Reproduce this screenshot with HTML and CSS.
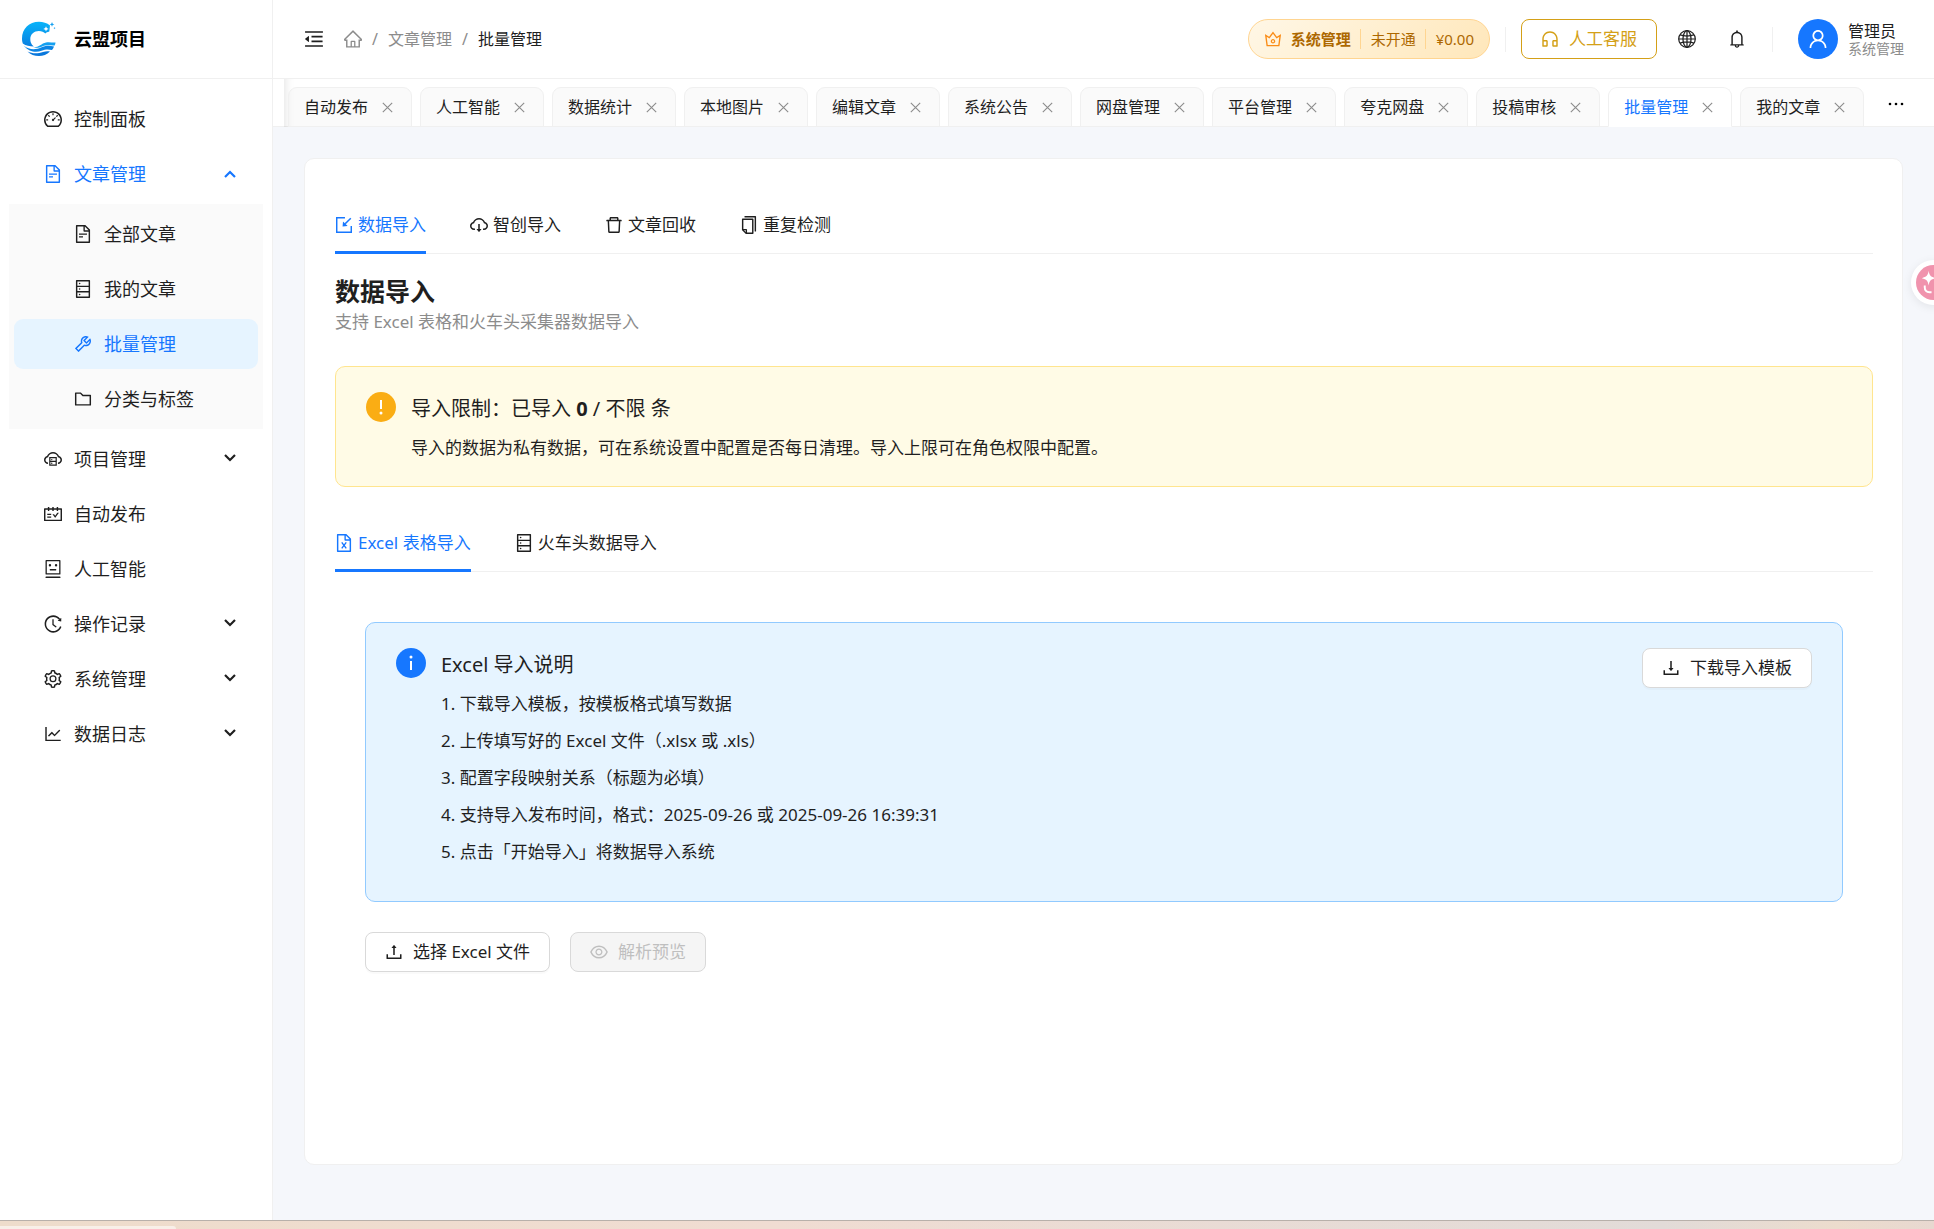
FILE: index.html
```html
<!DOCTYPE html>
<html lang="zh-CN">
<head>
  <meta charset="UTF-8">
  <meta name="viewport" content="width=device-width, initial-scale=1.0">
  <title>批量管理 - 云盟项目</title>
  <link rel="stylesheet" href="styles.css">
</head>
<body>

  <!-- icon set -->
  <svg class="sprite" aria-hidden="true">
    <symbol id="i-dashboard" viewBox="64 64 896 896"><path d="M924.8 385.6a446.7 446.7 0 00-96-142.4 446.7 446.7 0 00-142.4-96C631.1 123.8 572.5 112 512 112s-119.1 11.8-174.4 35.2a446.7 446.7 0 00-142.4 96 446.7 446.7 0 00-96 142.4C75.8 440.9 64 499.5 64 560c0 132.7 58.3 257.7 159.9 343.1l1.7 1.4c5.8 4.8 13.1 7.5 20.6 7.5h531.7c7.5 0 14.8-2.7 20.6-7.5l1.7-1.4C901.7 817.7 960 692.7 960 560c0-60.5-11.9-119.1-35.2-174.4zM761.4 836H262.6A371.12 371.12 0 01140 560c0-99.4 38.7-192.8 109-263 70.3-70.3 163.7-109 263-109 99.4 0 192.8 38.7 263 109 70.3 70.3 109 163.7 109 263 0 105.6-44.5 205.5-122.6 276zM623.5 421.5a8.03 8.03 0 00-11.3 0L527.7 506c-18.7-5-39.4-.2-54.1 14.5a55.95 55.95 0 000 79.2 55.95 55.95 0 0079.2 0 55.87 55.87 0 0014.5-54.1l84.5-84.5c3.1-3.1 3.1-8.2 0-11.3l-28.3-28.3zM490 320h44c4.4 0 8-3.6 8-8v-80c0-4.4-3.6-8-8-8h-44c-4.4 0-8 3.6-8 8v80c0 4.4 3.6 8 8 8zm260 218v44c0 4.4 3.6 8 8 8h80c4.4 0 8-3.6 8-8v-44c0-4.4-3.6-8-8-8h-80c-4.4 0-8 3.6-8 8zm12.7-197.2l-31.1-31.1a8.03 8.03 0 00-11.3 0l-56.6 56.6a8.03 8.03 0 000 11.3l31.1 31.1c3.1 3.1 8.2 3.1 11.3 0l56.6-56.6c3.1-3.1 3.1-8.2 0-11.3zm-458.6-31.1a8.03 8.03 0 00-11.3 0l-31.1 31.1a8.03 8.03 0 000 11.3l56.6 56.6c3.1 3.1 8.2 3.1 11.3 0l31.1-31.1c3.1-3.1 3.1-8.2 0-11.3l-56.6-56.6zM262 530h-80c-4.4 0-8 3.6-8 8v44c0 4.4 3.6 8 8 8h80c4.4 0 8-3.6 8-8v-44c0-4.4-3.6-8-8-8z"/></symbol>
    <symbol id="i-file-text" viewBox="64 64 896 896"><path d="M854.6 288.6L639.4 73.4c-6-6-14.1-9.4-22.6-9.4H192c-17.7 0-32 14.3-32 32v832c0 17.7 14.3 32 32 32h640c17.7 0 32-14.3 32-32V311.3c0-8.5-3.4-16.7-9.4-22.7zM790.2 326H602V137.8L790.2 326zm1.8 562H232V136h302v216a42 42 0 0042 42h216v494zM504 618H320c-4.4 0-8 3.6-8 8v48c0 4.4 3.6 8 8 8h184c4.4 0 8-3.6 8-8v-48c0-4.4-3.6-8-8-8zM312 490v48c0 4.4 3.6 8 8 8h384c4.4 0 8-3.6 8-8v-48c0-4.4-3.6-8-8-8H320c-4.4 0-8 3.6-8 8z"/></symbol>
    <symbol id="i-file-excel" viewBox="64 64 896 896"><path d="M854.6 288.6L639.4 73.4c-6-6-14.1-9.4-22.6-9.4H192c-17.7 0-32 14.3-32 32v832c0 17.7 14.3 32 32 32h640c17.7 0 32-14.3 32-32V311.3c0-8.5-3.4-16.7-9.4-22.7zM790.2 326H602V137.8L790.2 326zm1.8 562H232V136h302v216a42 42 0 0042 42h216v494z"/><path d="M400 480L624 780M624 480L400 780" fill="none" stroke="currentColor" stroke-width="68"/></symbol>
    <symbol id="i-database" viewBox="64 64 896 896"><path d="M832 64H192c-17.7 0-32 14.3-32 32v832c0 17.7 14.3 32 32 32h640c17.7 0 32-14.3 32-32V96c0-17.7-14.3-32-32-32zm-600 72h560v208H232V136zm560 480H232V408h560v208zm0 272H232V680h560v208zM304 240a40 40 0 1080 0 40 40 0 10-80 0zm0 272a40 40 0 1080 0 40 40 0 10-80 0zm0 272a40 40 0 1080 0 40 40 0 10-80 0z"/></symbol>
    <symbol id="i-tool" viewBox="64 64 896 896"><path d="M876.6 239.5c-.5-.9-1.2-1.8-2-2.5-5-5-13.1-5-18.1 0L684.2 409.3l-67.9-67.9L788.7 169c.8-.8 1.4-1.6 2-2.5 3.6-6.1 1.6-13.9-4.5-17.5-98.2-58-226.8-44.7-311.3 39.7-67 67-89.2 162-66.5 247.4l-293 293c-3 3-2.8 7.9.3 11l169.7 169.7c3.1 3.1 8.1 3.3 11 .3l292.9-292.9c85.5 22.8 180.5.7 247.6-66.4 84.4-84.5 97.7-213.1 39.7-311.3zM786 499.8c-58.1 58.1-145.3 69.3-214.6 33.6l-8.8 8.8-.1-.1-274 274.1-79.2-79.2 230.1-230.1s0 .1.1.1l52.8-52.8c-35.7-69.3-24.5-156.5 33.6-214.6a184.2 184.2 0 01144-53.5L537 318.9a32.05 32.05 0 000 45.3l124.5 124.5a32.05 32.05 0 0045.3 0l132.8-132.8c3.7 51.8-14.4 104.8-53.6 143.9z"/></symbol>
    <symbol id="i-folder" viewBox="64 64 896 896"><path d="M880 298.4H521L403.7 186.2a8.15 8.15 0 00-5.5-2.2H144c-17.7 0-32 14.3-32 32v592c0 17.7 14.3 32 32 32h736c17.7 0 32-14.3 32-32V330.4c0-17.7-14.3-32-32-32zM840 768H184V256h188.5l119.6 114.4H840V768z"/></symbol>
    <symbol id="i-cloud-server" viewBox="64 64 896 896"><path d="M811.4 366.7C765.6 245.9 648.9 160 512.2 160S258.8 245.8 213 366.6C127.3 389.1 64 467.2 64 560c0 110.5 89.5 200 199.9 200v-76c-33.7 0-65.4-13.4-89-37.7-23.5-24.2-36-56.8-34.9-90.6.9-26.4 9.9-51.2 26.2-72.1 16.7-21.3 40.1-36.8 66.1-43.7l37.9-9.9 13.9-36.6c8.6-22.8 20.6-44.1 35.7-63.4a245.6 245.6 0 0152.4-49.9c41.1-28.9 89.5-44.2 140-44.2s98.9 15.3 140 44.2c19.9 14 37.5 30.8 52.4 49.9 15.1 19.3 27.1 40.7 35.7 63.4l13.8 36.5 37.8 10C846.1 454.5 884 503.8 884 560c0 33.1-12.9 64.3-36.3 87.7a123.07 123.07 0 01-87.6 36.3v76C870.5 760 960 670.5 960 560c0-92.7-63.1-170.7-148.6-193.3z"/><path d="M353 445h318v372H353zM353 631h318" fill="none" stroke="currentColor" stroke-width="60"/><circle cx="450" cy="540" r="34"/><circle cx="450" cy="724" r="34"/></symbol>
    <symbol id="i-schedule" viewBox="64 64 896 896"><path d="M928 224H768v-56c0-4.4-3.6-8-8-8h-56c-4.4 0-8 3.6-8 8v56H548v-56c0-4.4-3.6-8-8-8h-56c-4.4 0-8 3.6-8 8v56H328v-56c0-4.4-3.6-8-8-8h-56c-4.4 0-8 3.6-8 8v56H96c-17.7 0-32 14.3-32 32v576c0 17.7 14.3 32 32 32h832c17.7 0 32-14.3 32-32V256c0-17.7-14.3-32-32-32zm-40 568H136V296h120v56c0 4.4 3.6 8 8 8h56c4.4 0 8-3.6 8-8v-56h148v56c0 4.4 3.6 8 8 8h56c4.4 0 8-3.6 8-8v-56h148v56c0 4.4 3.6 8 8 8h56c4.4 0 8-3.6 8-8v-56h120v496zM416 496H232c-4.4 0-8 3.6-8 8v48c0 4.4 3.6 8 8 8h184c4.4 0 8-3.6 8-8v-48c0-4.4-3.6-8-8-8zm0 136H232c-4.4 0-8 3.6-8 8v48c0 4.4 3.6 8 8 8h184c4.4 0 8-3.6 8-8v-48c0-4.4-3.6-8-8-8zm308.2-177.4L620.6 598.3l-52.8-73.1c-3-4.2-7.8-6.6-12.9-6.6H500c-6.5 0-10.3 7.4-6.5 12.7l114.1 158.2a15.9 15.9 0 0025.8 0l165-228.7c3.8-5.3 0-12.7-6.5-12.7H737c-5-.1-9.8 2.4-12.8 6.5z"/></symbol>
    <symbol id="i-robot" viewBox="64 64 896 896"><path d="M300 328a60 60 0 10120 0 60 60 0 10-120 0zM852 64H172c-17.7 0-32 14.3-32 32v660c0 17.7 14.3 32 32 32h680c17.7 0 32-14.3 32-32V96c0-17.7-14.3-32-32-32zm-32 660H204V128h616v596zM604 328a60 60 0 10120 0 60 60 0 10-120 0zm250.2 556H169.8c-16.5 0-29.8 14.3-29.8 32v36c0 4.4 3.3 8 7.4 8h729.1c4.1 0 7.4-3.6 7.4-8v-36c.1-17.7-13.2-32-29.7-32zM664 508H360c-4.4 0-8 3.6-8 8v60c0 4.4 3.6 8 8 8h304c4.4 0 8-3.6 8-8v-60c0-4.4-3.6-8-8-8z"/></symbol>
    <symbol id="i-history" viewBox="64 64 896 896"><path d="M536.1 273H488c-4.4 0-8 3.6-8 8v275.3c0 2.6 1.2 5 3.3 6.5l165.3 120.7c3.6 2.6 8.6 1.9 11.2-1.7l28.6-39c2.7-3.7 1.9-8.7-1.7-11.2L544.1 528.5V281c0-4.4-3.6-8-8-8zm219.8 75.2l156.8 38.3c5 1.2 9.9-2.6 9.9-7.7l.8-161.5c0-6.7-7.7-10.5-12.9-6.3L752.9 334.1a8 8 0 003 14.1zm167.7 301.1l-56.7-19.5a8 8 0 00-10.1 4.8c-1.9 5.1-3.9 10.1-6 15.1-17.8 42.1-43.3 80-75.9 112.5a353 353 0 01-112.5 75.9 352.18 352.18 0 01-137.7 27.8c-47.8 0-94.1-9.3-137.7-27.8a353 353 0 01-112.5-75.9c-32.5-32.5-58-70.4-75.9-112.5A353.44 353.44 0 01171 512c0-47.8 9.3-94.2 27.8-137.8 17.8-42.1 43.3-80 75.9-112.5a353 353 0 01112.5-75.9C430.6 167.3 477 158 524.8 158s94.1 9.3 137.7 27.8A353 353 0 01775 261.7c10.2 10.3 19.8 21 28.6 32.3l59.8-46.8C784.7 146.6 662.2 81.9 524.6 82 285 82.1 92.6 276.7 95 516.4 97.4 751.9 288.9 942 524.8 942c185.5 0 343.5-117.6 403.7-282.3 1.5-4.2-.7-8.9-4.9-10.4z"/></symbol>
    <symbol id="i-setting" viewBox="64 64 896 896"><path d="M924.8 625.7l-65.5-56c3.1-19 4.7-38.4 4.7-57.8s-1.6-38.8-4.7-57.8l65.5-56a32.03 32.03 0 009.3-35.2l-.9-2.6a443.74 443.74 0 00-79.7-137.9l-1.8-2.1a32.12 32.12 0 00-35.1-9.5l-81.3 28.9c-30-24.6-63.5-44-99.7-57.6l-15.7-85a32.05 32.05 0 00-25.8-25.7l-2.7-.5c-52.1-9.4-106.9-9.4-159 0l-2.7.5a32.05 32.05 0 00-25.8 25.7l-15.8 85.4a351.86 351.86 0 00-99 57.4l-81.9-29.1a32 32 0 00-35.1 9.5l-1.8 2.1a446.02 446.02 0 00-79.7 137.9l-.9 2.6c-4.5 12.5-.8 26.5 9.3 35.2l66.3 56.6c-3.1 18.8-4.6 38-4.6 57.1 0 19.2 1.5 38.4 4.6 57.1L99 625.5a32.03 32.03 0 00-9.3 35.2l.9 2.6c18.1 50.4 44.9 96.9 79.7 137.9l1.8 2.1a32.12 32.12 0 0035.1 9.5l81.9-29.1c29.8 24.5 63.1 43.9 99 57.4l15.8 85.4a32.05 32.05 0 0025.8 25.7l2.7.5a449.4 449.4 0 00159 0l2.7-.5a32.05 32.05 0 0025.8-25.7l15.7-85a350 350 0 0099.7-57.6l81.3 28.9a32 32 0 0035.1-9.5l1.8-2.1c34.8-41.1 61.6-87.5 79.7-137.9l.9-2.6c4.5-12.3.8-26.3-9.3-35zM788.3 465.9c2.5 15.1 3.8 30.6 3.8 46.1s-1.3 31-3.8 46.1l-6.6 40.1 74.7 63.9a370.03 370.03 0 01-42.6 73.6L721 702.8l-31.4 25.8c-23.9 19.6-50.5 35-79.3 45.8l-38.1 14.3-17.9 97a377.5 377.5 0 01-85 0l-17.9-97.2-37.8-14.5c-28.5-10.8-55-26.2-78.7-45.7l-31.4-25.9-93.4 33.2c-17-22.9-31.2-47.6-42.6-73.6l75.5-64.5-6.5-40c-2.4-14.9-3.7-30.3-3.7-45.5 0-15.3 1.2-30.6 3.7-45.5l6.5-40-75.5-64.5c11.3-26.1 25.6-50.7 42.6-73.6l93.4 33.2 31.4-25.9c23.7-19.5 50.2-34.9 78.7-45.7l37.9-14.3 17.9-97.2c28.1-3.2 56.8-3.2 85 0l17.9 97 38.1 14.3c28.7 10.8 55.4 26.2 79.3 45.8l31.4 25.8 92.8-32.9c17 22.9 31.2 47.6 42.6 73.6L781.8 426l6.5 39.9z"/><circle cx="512" cy="502" r="144" fill="none" stroke="currentColor" stroke-width="64"/></symbol>
    <symbol id="i-chart" viewBox="64 64 896 896"><path d="M888 792H200V168c0-4.4-3.6-8-8-8h-56c-4.4 0-8 3.6-8 8v688c0 4.4 3.6 8 8 8h752c4.4 0 8-3.6 8-8v-56c0-4.4-3.6-8-8-8zM305.8 637.7c3.1 3.1 8.1 3.1 11.3 0l138.3-137.6L583 628.5c3.1 3.1 8.2 3.1 11.3 0l275.4-275.3c3.1-3.1 3.1-8.2 0-11.3l-39.6-39.6a8.03 8.03 0 00-11.3 0l-230 229.9L461.4 404a8.03 8.03 0 00-11.3 0L266.3 586.7a8.03 8.03 0 000 11.3l39.5 39.7z"/></symbol>
    <symbol id="i-home" viewBox="64 64 896 896"><path d="M946.5 505L560.1 118.8l-25.9-25.9a31.5 31.5 0 00-44.4 0L77.5 505a63.9 63.9 0 00-18.8 46c.4 35.2 29.7 63.3 64.9 63.3h42.5V940h691.8V614.3h43.4c17.1 0 33.2-6.7 45.3-18.8a63.6 63.6 0 0018.7-45.3c0-17-6.7-33.1-18.8-45.2zM568 868H456V664h112v204zm217.9-325.7V868H632V640c0-22.1-17.9-40-40-40H432c-22.1 0-40 17.9-40 40v228H238.1V542.3h-96l370-369.7 23.1 23.1L882 542.3h-96.1z"/></symbol>
    <symbol id="i-fold" viewBox="64 64 896 896"><path d="M408 442h480c4.4 0 8-3.6 8-8v-56c0-4.4-3.6-8-8-8H408c-4.4 0-8 3.6-8 8v56c0 4.4 3.6 8 8 8zm-8 204c0 4.4 3.6 8 8 8h480c4.4 0 8-3.6 8-8v-56c0-4.4-3.6-8-8-8H408c-4.4 0-8 3.6-8 8v56zm504-486H120c-4.4 0-8 3.6-8 8v56c0 4.4 3.6 8 8 8h784c4.4 0 8-3.6 8-8v-56c0-4.4-3.6-8-8-8zm0 632H120c-4.4 0-8 3.6-8 8v56c0 4.4 3.6 8 8 8h784c4.4 0 8-3.6 8-8v-56c0-4.4-3.6-8-8-8zM115.4 518.9L271.7 642c5.8 4.6 14.4.5 14.4-6.9V388.9c0-7.4-8.5-11.5-14.4-6.9L115.4 505.1a8.74 8.74 0 000 13.8z"/></symbol>
    <symbol id="i-crown" viewBox="64 64 896 896"><path d="M899.6 276.5L705 396.4 518.4 147.5a8.06 8.06 0 00-12.9 0L319 396.4 124.3 276.5c-5.7-3.5-13.1 1.2-12.2 7.9L188.5 865c1.1 7.9 7.9 14 16 14h615.1c8 0 14.9-6 15.9-14l76.4-580.6c.8-6.7-6.5-11.4-12.3-7.9zm-126 534.1H250.3l-53.8-409.4 139.8 86.1L512 252.9l175.7 234.4 139.8-86.1-53.9 409.4zM512 509c-62.1 0-112.6 50.5-112.6 112.6S449.9 734.2 512 734.2s112.6-50.5 112.6-112.6S574.1 509 512 509zm0 160.9c-26.6 0-48.2-21.6-48.2-48.3 0-26.6 21.6-48.3 48.2-48.3s48.2 21.6 48.2 48.3c0 26.6-21.6 48.3-48.2 48.3z"/></symbol>
    <symbol id="i-service" viewBox="64 64 896 896"><path d="M512 128c-212.1 0-384 171.9-384 384v360c0 13.3 10.7 24 24 24h184c35.3 0 64-28.7 64-64V624c0-35.3-28.7-64-64-64H200v-48c0-172.3 139.7-312 312-312s312 139.7 312 312v48H688c-35.3 0-64 28.7-64 64v208c0 35.3 28.7 64 64 64h184c13.3 0 24-10.7 24-24V512c0-212.1-171.9-384-384-384zM328 632v192H200V632h128zm496 192H696V632h128v192z"/></symbol>
    <symbol id="i-globe" viewBox="64 64 896 896"><g fill="none" stroke="currentColor" stroke-width="62"><circle cx="512" cy="512" r="412"/><ellipse cx="512" cy="512" rx="200" ry="412"/><path d="M512 100v824M100 512h824M165 310c200 64 494 64 694 0M165 714c200-64 494-64 694 0"/></g></symbol>
    <symbol id="i-bell" viewBox="64 64 896 896"><path d="M816 768h-24V428c0-141.1-104.3-257.7-240-277.1V112c0-22.1-17.9-40-40-40s-40 17.9-40 40v38.9c-135.7 19.4-240 136-240 277.1v340h-24c-17.7 0-32 14.3-32 32v32c0 4.4 3.6 8 8 8h216c0 61.8 50.2 112 112 112s112-50.2 112-112h216c4.4 0 8-3.6 8-8v-32c0-17.7-14.3-32-32-32zM512 888c-26.5 0-48-21.5-48-48h96c0 26.5-21.5 48-48 48zM304 768V428c0-55.6 21.6-107.8 60.9-147.1S456.4 220 512 220c55.6 0 107.8 21.6 147.1 60.9S720 372.4 720 428v340H304z"/></symbol>
    <symbol id="i-user" viewBox="64 64 896 896"><path d="M858.5 763.6a374 374 0 00-80.6-119.5 375.63 375.63 0 00-119.5-80.6c-.4-.2-.8-.3-1.2-.5C719.5 518 760 444.7 760 362c0-137-111-248-248-248S264 225 264 362c0 82.7 40.5 156 102.8 201.1-.4.2-.8.3-1.2.5-44.8 18.9-85 46-119.5 80.6a375.63 375.63 0 00-80.6 119.5A371.7 371.7 0 00136 901.8a8 8 0 008 8.2h60c4.4 0 7.9-3.5 8-7.8 2-77.2 33-149.5 87.8-204.3 56.7-56.7 132-87.9 212.2-87.9s155.5 31.2 212.2 87.9C779 752.7 810 825 812 902.2c.1 4.4 3.6 7.8 8 7.8h60a8 8 0 008-8.2c-1-47.8-10.9-94.3-29.5-138.2zM512 534c-45.9 0-89.1-17.9-121.6-50.4S340 407.9 340 362c0-45.9 17.9-89.1 50.4-121.6S466.1 190 512 190s89.1 17.9 121.6 50.4S684 316.1 684 362c0 45.9-17.9 89.1-50.4 121.6S557.9 534 512 534z"/></symbol>
    <symbol id="i-import" viewBox="64 64 896 896"><path d="M560 150H150v724h724V560" fill="none" stroke="currentColor" stroke-width="72"/><path d="M850 174L570 454" fill="none" stroke="currentColor" stroke-width="76"/><path d="M462 352l-20 226a8 8 0 009 9l226-20a8 8 0 005-13L476 347a8 8 0 00-14 5z"/></symbol>
    <symbol id="i-cloud-download" viewBox="64 64 896 896"><path d="M624 706.3h-74.1V464c0-4.4-3.6-8-8-8h-60c-4.4 0-8 3.6-8 8v242.3H400c-6.7 0-10.4 7.7-6.3 12.9l112 141.7a8 8 0 0012.6 0l112-141.7c4.1-5.2.4-12.9-6.3-12.9z"/><path d="M811.4 366.7C765.6 245.9 648.9 160 512.2 160S258.8 245.8 213 366.6C127.3 389.1 64 467.2 64 560c0 110.5 89.5 200 199.9 200H304c4.4 0 8-3.6 8-8v-60c0-4.4-3.6-8-8-8h-40.1c-33.7 0-65.4-13.4-89-37.7-23.5-24.2-36-56.8-34.9-90.6.9-26.4 9.9-51.2 26.2-72.1 16.7-21.3 40.1-36.8 66.1-43.7l37.9-9.9 13.9-36.6c8.6-22.8 20.6-44.1 35.7-63.4a245.6 245.6 0 0152.4-49.9c41.1-28.9 89.5-44.2 140-44.2s98.9 15.3 140 44.2c19.9 14 37.5 30.8 52.4 49.9 15.1 19.3 27.1 40.7 35.7 63.4l13.8 36.5 37.8 10C846.1 454.5 884 503.8 884 560c0 33.1-12.9 64.3-36.3 87.7a123.07 123.07 0 01-87.6 36.3H720c-4.4 0-8 3.6-8 8v60c0 4.4 3.6 8 8 8h40.1C870.5 760 960 670.5 960 560c0-92.7-63.1-170.7-148.6-193.3z"/></symbol>
    <symbol id="i-delete" viewBox="64 64 896 896"><path d="M360 184h304v72h72v-80c0-35.3-28.7-64-64-64H352c-35.3 0-64 28.7-64 64v80h72v-72zm504 72H160c-17.7 0-32 14.3-32 32v32c0 4.4 3.6 8 8 8h60.4l24.7 523c1.6 34.1 29.8 61 63.9 61h454c34.2 0 62.3-26.8 63.9-61l24.7-523H888c4.4 0 8-3.6 8-8v-32c0-17.7-14.3-32-32-32zM731.3 840H292.7l-24.2-512h487l-24.2 512z"/></symbol>
    <symbol id="i-copy" viewBox="64 64 896 896"><path d="M832 64H296c-4.4 0-8 3.6-8 8v56c0 4.4 3.6 8 8 8h496v688c0 4.4 3.6 8 8 8h56c4.4 0 8-3.6 8-8V96c0-17.7-14.3-32-32-32zM704 192H192c-17.7 0-32 14.3-32 32v530.7c0 8.5 3.4 16.6 9.4 22.6l173.3 173.3c2.2 2.2 4.7 4 7.4 5.5v1.9h4.2c3.5 1.3 7.2 2 11 2H704c17.7 0 32-14.3 32-32V224c0-17.7-14.3-32-32-32zM350 856.2L263.9 770H350v86.2zM664 888H414V746c0-22.1-17.9-40-40-40H232V264h432v624z"/></symbol>
    <symbol id="i-upload" viewBox="64 64 896 896"><path d="M400 317.7h73.9V656c0 4.4 3.6 8 8 8h60c4.4 0 8-3.6 8-8V317.7H624c6.7 0 10.4-7.7 6.3-12.9L518.3 163a8 8 0 00-12.6 0l-112 141.7c-4.1 5.3-.4 13 6.3 13zM878 626h-60c-4.4 0-8 3.6-8 8v154H214V634c0-4.4-3.6-8-8-8h-60c-4.4 0-8 3.6-8 8v198c0 17.7 14.3 32 32 32h684c17.7 0 32-14.3 32-32V634c0-4.4-3.6-8-8-8z"/></symbol>
    <symbol id="i-download" viewBox="64 64 896 896"><path d="M505.7 661a8 8 0 0012.6 0l112-141.7c4.1-5.2.4-12.9-6.3-12.9h-74.1V168c0-4.4-3.6-8-8-8h-60c-4.4 0-8 3.6-8 8v338.3H400c-6.7 0-10.4 7.7-6.3 12.9l112 141.8zM878 626h-60c-4.4 0-8 3.6-8 8v154H214V634c0-4.4-3.6-8-8-8h-60c-4.4 0-8 3.6-8 8v198c0 17.7 14.3 32 32 32h684c17.7 0 32-14.3 32-32V634c0-4.4-3.6-8-8-8z"/></symbol>
    <symbol id="i-eye" viewBox="64 64 896 896"><path d="M942.2 486.2C847.4 286.5 704.1 186 512 186c-192.2 0-335.4 100.5-430.2 300.3a60.3 60.3 0 000 51.5C176.6 737.5 319.9 838 512 838c192.2 0 335.4-100.5 430.2-300.3 7.7-16.2 7.7-35 0-51.5zM512 766c-161.3 0-279.4-81.8-362.7-254C232.6 339.8 350.7 258 512 258c161.3 0 279.4 81.8 362.7 254C791.5 684.2 673.4 766 512 766zm-4-430c-97.2 0-176 78.8-176 176s78.8 176 176 176 176-78.8 176-176-78.8-176-176-176zm0 288c-61.9 0-112-50.1-112-112s50.1-112 112-112 112 50.1 112 112-50.1 112-112 112z"/></symbol>
    <symbol id="i-close" viewBox="0 0 16 16"><path d="M3 3l10 10M13 3L3 13" fill="none" stroke="currentColor" stroke-width="1.2"/></symbol>
    <symbol id="i-down" viewBox="0 0 12 12"><path d="M1 2l5 5 5-5" fill="none" stroke="currentColor" stroke-width="2.2"/></symbol>
    <symbol id="i-up" viewBox="0 0 12 12"><path d="M1 9l5-5 5 5" fill="none" stroke="currentColor" stroke-width="2.2"/></symbol>
    <symbol id="i-more" viewBox="0 0 16 16"><circle cx="2" cy="8" r="1.3"/><circle cx="8" cy="8" r="1.3"/><circle cx="14" cy="8" r="1.3"/></symbol>
  </svg>

  <div class="app">
    <aside class="sidebar">
      <a class="brand" href="#">
        <svg class="brand-logo" viewBox="0 0 36 36" aria-hidden="true">
          <defs>
            <linearGradient id="wave" x1="0" y1="0" x2="0" y2="1">
              <stop offset="0" stop-color="#08b4fa"/>
              <stop offset="1" stop-color="#0a7fe0"/>
            </linearGradient>
          </defs>
          <path fill="url(#wave)" d="M29 4.500C26 2 22 .8 18 .8 8 .8 1 8 1 17.500c0 2 .3 3.500.8 5 3 2.500 7 2.500 11 3-3-2.500-3.500-5-3.500-7.500 0-5 4-8 8.500-8 3 0 5 1 6.500 2.500 1-1 2-1.500 4-2z"/>
          <path fill="#14a0f0" d="M11 26c6 1.500 9-3.500 14-4.500 4-.8 6 .5 9.500 0-.2 1.500-.4 2-.8 3-5 .2-8-1-12 .8-4 1.700-7 2-10.700.7z"/>
          <path fill="#0b84e4" d="M2.500 24.500c6 5 13 4 17.500 2 4.500-2 8-2 13-1-.8 2-1.200 2.500-2 3.500-4-.8-6.500-.8-10.500.8-5 2-12 1.700-18-5.300z"/>
          <path fill="#0a78dc" d="M6.500 30.500c5 2.500 11 2 15.500.5 2.500-.8 4.500-1 7-.5-3 3-7 4.500-11 4.500-4.500 0-8.500-1.500-11.500-4.500z"/>
          <path fill="#fff" d="M25 5.200l.8 1.900 1.900.8-1.900.8-.8 1.900-.8-1.900-1.900-.8 1.900-.8z"/>
          <path fill="#14a0f0" d="M31 1l.7 1.700 1.700.7-1.700.7L31 5.800l-.7-1.700-1.700-.7 1.700-.7zM33.500 6l.3.800.8.3-.8.3-.3.8-.3-.8-.8-.3.800-.3z"/>
        </svg>
        <span class="brand-name">云盟项目</span>
      </a>
      <nav class="menu" aria-label="主菜单">
        <a class="menu-item" href="#"><svg class="icon"><use href="#i-dashboard"/></svg>控制面板</a>
        <a class="menu-item active" href="#"><svg class="icon"><use href="#i-file-text"/></svg>文章管理<svg class="arrow"><use href="#i-up"/></svg></a>
        <div class="submenu">
          <a class="submenu-item" href="#"><svg class="icon"><use href="#i-file-text"/></svg>全部文章</a>
          <a class="submenu-item" href="#"><svg class="icon"><use href="#i-database"/></svg>我的文章</a>
          <a class="submenu-item selected" href="#"><svg class="icon"><use href="#i-tool"/></svg>批量管理</a>
          <a class="submenu-item" href="#"><svg class="icon"><use href="#i-folder"/></svg>分类与标签</a>
        </div>
        <a class="menu-item" href="#"><svg class="icon"><use href="#i-cloud-server"/></svg>项目管理<svg class="arrow"><use href="#i-down"/></svg></a>
        <a class="menu-item" href="#"><svg class="icon"><use href="#i-schedule"/></svg>自动发布</a>
        <a class="menu-item" href="#"><svg class="icon"><use href="#i-robot"/></svg>人工智能</a>
        <a class="menu-item" href="#"><svg class="icon"><use href="#i-history"/></svg>操作记录<svg class="arrow"><use href="#i-down"/></svg></a>
        <a class="menu-item" href="#"><svg class="icon"><use href="#i-setting"/></svg>系统管理<svg class="arrow"><use href="#i-down"/></svg></a>
        <a class="menu-item" href="#"><svg class="icon"><use href="#i-chart"/></svg>数据日志<svg class="arrow"><use href="#i-down"/></svg></a>
      </nav>
    </aside>

    <div class="main">
      <header class="header">
        <button class="icon-btn" type="button" aria-label="收起菜单"><svg class="icon icon-lg"><use href="#i-fold"/></svg></button>
        <nav class="breadcrumb" aria-label="面包屑">
          <a href="#" aria-label="首页"><svg class="icon"><use href="#i-home"/></svg></a>
          <span class="slash">/</span>
          <a href="#">文章管理</a>
          <span class="slash">/</span>
          <span class="current">批量管理</span>
        </nav>
        <div class="header-right">
          <a class="plan" href="#">
            <svg class="icon"><use href="#i-crown"/></svg>
            <strong>系统管理</strong>
            <span class="plan-part">未开通</span>
            <span class="plan-part">¥0.00</span>
          </a>
          <span class="divider"></span>
          <button class="service-btn" type="button"><svg class="icon"><use href="#i-service"/></svg>人工客服</button>
          <button class="icon-btn globe-btn" type="button" aria-label="语言"><svg class="icon"><use href="#i-globe"/></svg></button>
          <button class="icon-btn bell-btn" type="button" aria-label="通知"><svg class="icon"><use href="#i-bell"/></svg></button>
          <span class="divider"></span>
          <a class="user" href="#">
            <span class="avatar"><svg class="icon icon-lg"><use href="#i-user"/></svg></span>
            <span class="user-text">
              <span class="user-name">管理员</span>
              <span class="user-role">系统管理</span>
            </span>
          </a>
        </div>
      </header>

      <div class="page-tabs">
        <div class="page-tab-list">
          <div class="page-tab"><a href="#">自动发布</a><button type="button" aria-label="关闭"><svg><use href="#i-close"/></svg></button></div>
          <div class="page-tab"><a href="#">人工智能</a><button type="button" aria-label="关闭"><svg><use href="#i-close"/></svg></button></div>
          <div class="page-tab"><a href="#">数据统计</a><button type="button" aria-label="关闭"><svg><use href="#i-close"/></svg></button></div>
          <div class="page-tab"><a href="#">本地图片</a><button type="button" aria-label="关闭"><svg><use href="#i-close"/></svg></button></div>
          <div class="page-tab"><a href="#">编辑文章</a><button type="button" aria-label="关闭"><svg><use href="#i-close"/></svg></button></div>
          <div class="page-tab"><a href="#">系统公告</a><button type="button" aria-label="关闭"><svg><use href="#i-close"/></svg></button></div>
          <div class="page-tab"><a href="#">网盘管理</a><button type="button" aria-label="关闭"><svg><use href="#i-close"/></svg></button></div>
          <div class="page-tab"><a href="#">平台管理</a><button type="button" aria-label="关闭"><svg><use href="#i-close"/></svg></button></div>
          <div class="page-tab"><a href="#">夸克网盘</a><button type="button" aria-label="关闭"><svg><use href="#i-close"/></svg></button></div>
          <div class="page-tab"><a href="#">投稿审核</a><button type="button" aria-label="关闭"><svg><use href="#i-close"/></svg></button></div>
          <div class="page-tab current"><a href="#">批量管理</a><button type="button" aria-label="关闭"><svg><use href="#i-close"/></svg></button></div>
          <div class="page-tab"><a href="#">我的文章</a><button type="button" aria-label="关闭"><svg><use href="#i-close"/></svg></button></div>
        </div>
        <button class="tabs-more" type="button" aria-label="更多"><svg><use href="#i-more"/></svg></button>
      </div>

      <main class="content">
        <section class="card">
          <div class="tabs">
            <button class="tab active" type="button"><svg class="icon"><use href="#i-import"/></svg>数据导入</button>
            <button class="tab" type="button"><svg class="icon"><use href="#i-cloud-download"/></svg>智创导入</button>
            <button class="tab" type="button"><svg class="icon"><use href="#i-delete"/></svg>文章回收</button>
            <button class="tab" type="button"><svg class="icon"><use href="#i-copy"/></svg>重复检测</button>
          </div>

          <h2 class="title">数据导入</h2>
          <p class="subtitle">支持 Excel 表格和火车头采集器数据导入</p>

          <div class="alert alert-warning">
            <svg class="alert-icon" viewBox="0 0 30 30" aria-hidden="true">
              <circle cx="15" cy="15" r="15" fill="#faad14"/>
              <path d="M15 8v9" stroke="#fff" stroke-width="2"/>
              <circle cx="15" cy="21" r="1.500" fill="#fff"/>
            </svg>
            <div class="alert-body">
              <div class="alert-title">导入限制：已导入 <b>0</b> / 不限 条</div>
              <p class="alert-desc">导入的数据为私有数据，可在系统设置中配置是否每日清理。导入上限可在角色权限中配置。</p>
            </div>
          </div>

          <div class="tabs">
            <button class="tab active" type="button"><svg class="icon"><use href="#i-file-excel"/></svg>Excel 表格导入</button>
            <button class="tab" type="button"><svg class="icon"><use href="#i-database"/></svg>火车头数据导入</button>
          </div>

          <div class="panel">
            <div class="alert alert-info">
              <svg class="alert-icon" viewBox="0 0 30 30" aria-hidden="true">
                <circle cx="15" cy="15" r="15" fill="#1677ff"/>
                <path d="M15 13v9" stroke="#fff" stroke-width="2"/>
                <circle cx="15" cy="9" r="1.500" fill="#fff"/>
              </svg>
              <div class="alert-body">
                <div class="alert-title">Excel 导入说明</div>
                <ol class="steps">
                  <li>下载导入模板，按模板格式填写数据</li>
                  <li>上传填写好的 Excel 文件（.xlsx 或 .xls）</li>
                  <li>配置字段映射关系（标题为必填）</li>
                  <li>支持导入发布时间，格式：2025-09-26 或 2025-09-26 16:39:31</li>
                  <li>点击「开始导入」将数据导入系统</li>
                </ol>
              </div>
              <button class="btn" type="button"><svg class="icon"><use href="#i-download"/></svg>下载导入模板</button>
            </div>
            <div class="actions">
              <button class="btn" type="button"><svg class="icon"><use href="#i-upload"/></svg>选择 Excel 文件</button>
              <button class="btn" type="button" disabled><svg class="icon"><use href="#i-eye"/></svg>解析预览</button>
            </div>
          </div>
        </section>
      </main>
    </div>
  </div>

  <footer class="dock"><div class="dock-tab"></div></footer>

  <button class="assistant" type="button" aria-label="助手">
    <svg viewBox="0 0 36 36" aria-hidden="true">
      <circle cx="18" cy="18" r="18" fill="#f093ad"/>
      <path d="M13 6c.8 5 2 6.200 7 7.500-5 1.300-6.200 2.500-7 7.500-.8-5-2-6.200-7-7.500 5-1.300 6.200-2.500 7-7.500z" fill="#fff"/>
      <path d="M9 21v2c0 3 2 5 5 5h2M18.500 28h1.500" fill="none" stroke="#fff" stroke-width="2"/>
    </svg>
  </button>

</body>
</html>
```

FILE: styles.css
```css
* {
  box-sizing: border-box;
}

body {
  margin: 0;
  min-height: 100vh;
  display: flex;
  flex-direction: column;
  font-family: "Noto Sans", "Noto Sans CJK SC", sans-serif;
  font-size: 17px;
  line-height: 28px;
  color: #1f1f1f;
  background: #f5f7fb;
}

a {
  color: inherit;
  text-decoration: none;
}

button {
  font: inherit;
  color: inherit;
  background: none;
  border: 0;
  padding: 0;
  cursor: pointer;
}

.sprite {
  display: none;
}

.icon {
  width: 18px;
  height: 18px;
  flex: none;
  fill: currentColor;
}

.icon-lg {
  width: 20px;
  height: 20px;
}

.app {
  flex: 1;
  display: flex;
}

/* sidebar */
.sidebar {
  width: 273px;
  flex: none;
  background: #fff;
  border-right: 1px solid #f0f0f0;
}

.brand {
  display: flex;
  align-items: center;
  gap: 17px;
  height: 79px;
  padding-left: 21px;
  border-bottom: 1px solid #f0f0f0;
}

.brand-logo {
  width: 36px;
  height: 36px;
}

.brand-name {
  font-size: 18px;
  font-weight: 700;
  color: #000;
}

.menu {
  display: flex;
  flex-direction: column;
  gap: 5px;
  padding: 15px 9px;
  font-size: 18px;
}

.menu-item,
.submenu-item {
  display: flex;
  align-items: center;
  gap: 12px;
  height: 50px;
  border-radius: 9px;
}

.menu-item {
  padding: 0 27px 0 35px;
}

.menu-item.active {
  color: #1677ff;
}

.arrow {
  width: 12px;
  height: 12px;
  margin-left: auto;
}

.submenu {
  display: flex;
  flex-direction: column;
  gap: 5px;
  padding: 5px;
  background: #fafafa;
}

.submenu-item {
  padding-left: 60px;
}

.submenu-item.selected {
  color: #1677ff;
  background: #e6f4ff;
}

/* header */
.main {
  flex: 1;
  min-width: 0;
  display: flex;
  flex-direction: column;
}

.header {
  display: flex;
  align-items: center;
  height: 79px;
  padding: 0 30px 0 31px;
  background: #fff;
  border-bottom: 1px solid #f0f0f0;
}

.icon-btn {
  display: flex;
}

.breadcrumb {
  display: flex;
  align-items: center;
  gap: 10px;
  margin-left: 20px;
  font-size: 16px;
  line-height: 26px;
  color: #8c8c8c;
}

.breadcrumb a {
  display: flex;
}

.breadcrumb .current {
  color: #1f1f1f;
}

.header-right {
  display: flex;
  align-items: center;
  margin-left: auto;
}

.plan {
  display: flex;
  align-items: center;
  gap: 9px;
  height: 40px;
  padding: 0 15px;
  border: 1px solid #ffd591;
  border-radius: 20px;
  background: linear-gradient(135deg, #fff7e6, #ffe7ba);
  font-size: 15px;
  line-height: 20px;
  color: #ad6800;
}

.plan .icon {
  color: #fa8c16;
}

.plan-part {
  padding-left: 10px;
  border-left: 1px solid #ffd591;
}

.divider {
  width: 1px;
  height: 25px;
  margin: 0 15px;
  background: #f0f0f0;
}

.service-btn {
  display: flex;
  align-items: center;
  gap: 10px;
  height: 40px;
  padding: 0 19px;
  border: 1px solid #d4a017;
  border-radius: 8px;
  color: #d4a017;
}

.globe-btn {
  margin-left: 21px;
}

.bell-btn {
  margin: 0 12px 0 32px;
}

.bell-btn + .divider {
  margin-left: 14px;
}

.divider + .user {
  margin-left: 10px;
}

.user {
  display: flex;
  align-items: center;
  gap: 10px;
}

.avatar {
  display: flex;
  align-items: center;
  justify-content: center;
  width: 40px;
  height: 40px;
  border-radius: 50%;
  background: #1677ff;
  color: #fff;
}

.user-text {
  display: flex;
  flex-direction: column;
}

.user-name {
  font-size: 16px;
  line-height: 20px;
}

.user-role {
  font-size: 14px;
  line-height: 16px;
  color: #8c8c8c;
}

/* opened pages */
.page-tabs {
  display: flex;
  height: 48px;
  padding-left: 11px;
  background: #fff;
  border-bottom: 1px solid #f0f0f0;
}

.page-tab-list {
  flex: 1;
  min-width: 0;
  display: flex;
  align-items: flex-end;
  gap: 8px;
  margin-bottom: -1px;
  padding-left: 4px;
  box-shadow: inset 10px 0 8px -8px rgba(0, 0, 0, 0.1);
}

.page-tab {
  display: flex;
  align-items: center;
  gap: 12px;
  height: 40px;
  padding: 0 16px 0 15px;
  border: 1px solid #f0f0f0;
  border-radius: 9px 9px 0 0;
  background: rgba(0, 0, 0, 0.02);
  font-size: 16px;
  white-space: nowrap;
}

.page-tab.current {
  color: #1677ff;
  background: #fff;
  border-bottom-color: #fff;
}

.page-tab button {
  display: flex;
  color: #8c8c8c;
}

.page-tab svg {
  width: 15px;
  height: 15px;
}

.tabs-more {
  display: flex;
  align-items: center;
  padding: 2px 30px 0 20px;
}

.tabs-more svg {
  width: 16px;
  height: 16px;
}

/* content */
.content {
  flex: 1;
  display: flex;
  padding: 31px 31px 55px;
}

.card {
  flex: 1;
  min-width: 0;
  padding: 37px 29px 30px 30px;
  border: 1px solid #f0f0f0;
  border-radius: 10px;
  background: #fff;
}

.tabs {
  display: flex;
  gap: 44px;
  box-shadow: inset 0 -1px #f0f0f0;
}

.tab {
  display: flex;
  align-items: center;
  gap: 5px;
  padding: 15px 0;
}

.tab.active {
  color: #1677ff;
  box-shadow: inset 0 -3px #1677ff;
}

.title {
  margin: 20px 0 0;
  font-size: 25px;
  line-height: 34px;
}

.subtitle {
  margin: 0 0 30px;
  line-height: 28px;
  color: #8c8c8c;
}

.alert {
  display: flex;
  align-items: flex-start;
  gap: 15px;
  padding: 25px 30px;
  border: 1px solid;
  border-radius: 10px;
}

.alert-warning {
  margin-bottom: 27px;
  padding-bottom: 24px;
  background: #fffbe6;
  border-color: #ffe58f;
}

.alert-info {
  background: #e6f4ff;
  border-color: #91caff;
}

.alert-icon {
  width: 30px;
  height: 30px;
  flex: none;
}

.alert-body {
  flex: 1;
}

.alert-title {
  font-size: 20px;
  line-height: 34px;
}

.alert-desc {
  margin: 8px 0 0;
}

.steps {
  margin: 3px 0 6px;
  padding: 0;
  list-style-position: inside;
  line-height: 37px;
}

.panel {
  padding: 50px 30px 0;
}

.btn {
  display: flex;
  align-items: center;
  gap: 10px;
  height: 40px;
  padding: 0 19px;
  border: 1px solid #d9d9d9;
  border-radius: 8px;
  background: #fff;
  box-shadow: 0 2px 0 rgba(0, 0, 0, 0.02);
}

.btn:disabled {
  color: #bfbfbf;
  background: #f5f5f5;
  box-shadow: none;
  cursor: not-allowed;
}

.actions {
  display: flex;
  gap: 20px;
  margin-top: 30px;
}

/* bottom strip */
.dock {
  height: 9px;
  padding-top: 5px;
  border-top: 1px solid #b8b0aa;
  background: linear-gradient(90deg, #eedccb, #f0dcd2 40%, #e2dbd8 86%, #ecdccd 95%, #e8d8d0);
}

.dock-tab {
  width: 176px;
  height: 3px;
  border-radius: 0 6px 0 0;
  background: #f8efe8;
}

.assistant {
  position: fixed;
  top: 260px;
  right: -22px;
  display: flex;
  padding: 5px;
  border-radius: 50%;
  background: #fff;
  box-shadow: 0 2px 10px rgba(0, 0, 0, 0.08);
}

.assistant svg {
  width: 35px;
  height: 35px;
}
```
